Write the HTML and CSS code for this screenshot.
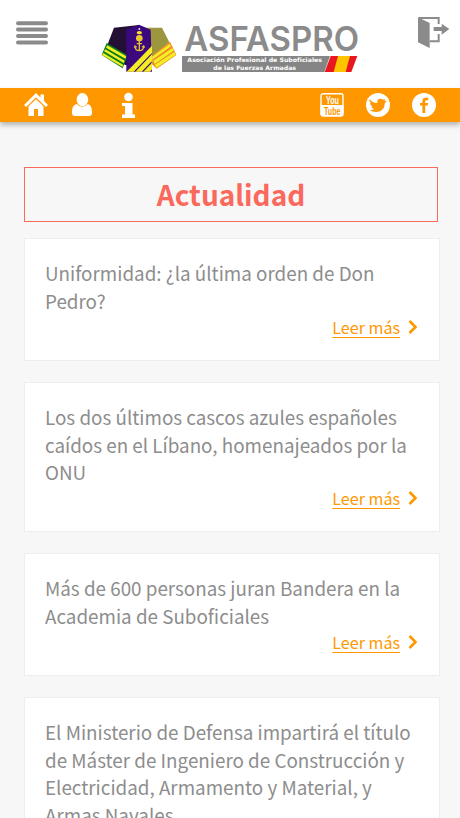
FILE: index.html
```html
<!DOCTYPE html>
<html lang="es">
<head>
<meta charset="utf-8">
<title>ASFASPRO</title>
<link rel="stylesheet" href="styles.css">
</head>
<body>
<header class="header">
  <svg class="menu" viewBox="0 0 32 26"><path d="M2 3.2h28M2 9.6h28M2 16h28M2 22.4h28"/></svg>
  <svg class="logo" viewBox="0 0 840 195">
    <path fill="#251035" d="M72 38L147 30V150H105L50 95z"/>
    <path fill="#9c963e" d="M150 38H216L238 82L186 125L160 110z"/>
    <path fill="#087c20" d="M50 84L113 121L98 160L35 120z"/>
    <path fill="#f5f020" d="M52 91L109 124L106 131L48 98zM46 103L104 137L101 144L42 109zM40 114L99 149L98 156L36 120z"/>
    <path fill="#ef8b22" d="M188 120L240 80L259 120L200 161L186 148z"/>
    <path fill="#f4ef24" d="M188 124L239 87L243 94L189 133zM190 137L247 99L251 107L194 147zM194 150L253 111L257 119L200 158z"/>
    <path fill="#3b087e" d="M147 29L182 44L186 170H109V43z"/>
    <path fill="#f4ed22" d="M110 170L186 92V113L131 170zM136 170L186 118V138L155 170zM160 170L186 143V163L180 170z"/>
    <g fill="none" stroke="#dfbd38" stroke-width="4"><path d="M148 79V106M140 86H156M135 94Q135 107 148 107Q161 107 161 94M133 98L135 93L140 97M156 97L161 93L164 98"/></g>
    <ellipse cx="148" cy="53" rx="8" ry="5" fill="#f4df29"/><circle cx="148" cy="70" r="10" fill="#e8c929"/><circle cx="148" cy="42" r="3" fill="#ddd"/>
    <text class="logo-name" x="283" y="107" textLength="524" lengthAdjust="spacingAndGlyphs">ASFASPRO</text>
    <path fill="#858585" d="M276 123H720L703 171H276z"/>
    <text class="logo-sub" x="292" y="142" textLength="404" lengthAdjust="spacingAndGlyphs">Asociación Profesional de Suboficiales</text>
    <text class="logo-sub" x="370" y="165" textLength="248" lengthAdjust="spacingAndGlyphs">de las Fuerzas Armadas</text>
    <path fill="#e9151f" d="M722 123H802L784 171H704z"/><path fill="#ffc400" d="M744 123H780L767 171H731z"/>
  </svg>
  <svg class="exit" viewBox="0 0 96 96"><path fill="#8b8b8b" d="M3 4L38 21V96L3 79z"/><path fill="none" stroke="#8b8b8b" stroke-width="6" d="M5 6H65V24M65 54V76H38"/><path fill="#8b8b8b" d="M50 33H74V23L97 39L74 56V45H50z"/></svg>
</header>
<nav class="bar">
  <div class="group">
    <svg class="icon" viewBox="0 0 24 24"><path d="M12 0L0 12L2 14L12 4.5L22 14L24 12L20 8V1.5H16.5V4.5z"/><path d="M12 6.2L4.5 13.3V23H10V16H14V23H19.5V13.3z"/></svg>
    <svg class="icon" viewBox="0 0 24 24"><ellipse cx="12.4" cy="6.6" rx="5.8" ry="6.6"/><path d="M6.5 11C3 12 2 15 2 20Q2 23 5 23H19Q22 23 22 20C22 15 21 12 17.8 11Q12.2 16.5 6.5 11z"/></svg>
    <svg class="icon" viewBox="0 0 24 24"><circle cx="12.5" cy="4" r="4.3"/><path d="M6 10H16.5V21.5H19V25H6V21.5H9V13H6z"/></svg>
  </div>
  <div class="group">
    <svg class="icon" viewBox="0 0 24 24"><rect x="1" y=".8" width="22" height="22" rx="2" fill="none" stroke="#fff" stroke-width="1.4"/><path d="M.5 12H23.5V21Q23.5 23.5 21 23.5H3Q.5 23.5 .5 21z"/><text class="you" x="6" y="10.6" textLength="13" lengthAdjust="spacingAndGlyphs">You</text><text class="tube" x="4" y="21.7" textLength="16.5" lengthAdjust="spacingAndGlyphs">Tube</text></svg>
    <svg class="icon" viewBox="0 0 24 24"><circle cx="12" cy="12" r="12"/><path class="cut" d="M3.6 6.2Q7 10 11.3 10.1Q10.8 5.8 14.5 5.8Q16 5.8 17 6.8L19.4 5.9L18.5 8L21 7.8L18.8 10Q18.7 18.3 10.6 19Q6.4 19.1 3.6 17.2Q6.5 17.3 8.2 15.9Q5.8 15.4 5.2 13.4H6.7Q4 12.2 4 9.7L5.3 10Q2.7 8.5 3.6 6.2z"/></svg>
    <svg class="icon" viewBox="0 0 24 24"><circle cx="12" cy="12" r="12"/><path class="cut" d="M10.4 20V12.5H8V10H10.4V8Q10.4 4.8 13.8 4.8H16.3V7.3H14.6Q13.2 7.3 13.2 8.6V10H16.2L15.8 12.5H13.2V20z"/></svg>
  </div>
</nav>
<main class="content">
  <h1 class="title">Actualidad</h1>
  <article class="card">
    <h2>Uniformidad: ¿la última orden de Don<br>Pedro?</h2>
    <div class="more"><a href="#">Leer más</a><svg viewBox="0 0 10 14"><path d="M1.5 1L7.5 7L1.5 13"/></svg></div>
  </article>
  <article class="card">
    <h2>Los dos últimos cascos azules españoles<br>caídos en el Líbano, homenajeados por la<br>ONU</h2>
    <div class="more"><a href="#">Leer más</a><svg viewBox="0 0 10 14"><path d="M1.5 1L7.5 7L1.5 13"/></svg></div>
  </article>
  <article class="card">
    <h2>Más de 600 personas juran Bandera en la<br>Academia de Suboficiales</h2>
    <div class="more"><a href="#">Leer más</a><svg viewBox="0 0 10 14"><path d="M1.5 1L7.5 7L1.5 13"/></svg></div>
  </article>
  <article class="card">
    <h2>El Ministerio de Defensa impartirá el título<br>de Máster de Ingeniero de Construcción y<br>Electricidad, Armamento y Material, y<br>Armas Navales</h2>
  </article>
</main>
</body>
</html>
```
FILE: styles.css
```css
* { box-sizing: border-box; }
html, body { height: 818px; overflow: hidden; }
body {
  margin: 0;
  background: #f7f7f7;
  font-family: "Noto Sans CJK SC", "Noto Sans", sans-serif;
}
.header {
  height: 88px;
  display: flex;
  align-items: flex-start;
  padding: 15px 10px 0 16px;
  background: #fff;
}
.menu { width: 32px; height: 26px; margin-top: 5px; }
.menu path { stroke: #8b8b8b; stroke-width: 4; stroke-linecap: round; }
.logo { width: 280px; height: 65px; margin-left: 42px; }
.logo-name { font: 600 103px Inter, sans-serif; fill: #8b8b8b; }
.logo-sub { font: 700 18px "DejaVu Sans", sans-serif; fill: #fff; }
.exit { width: 32px; height: 32px; margin-left: 47px; margin-top: 1px; }
.bar {
  height: 34px;
  display: flex;
  justify-content: space-between;
  padding: 5px 24px 0;
  background: #ff9800;
  box-shadow: 0 3px 5px rgba(0, 0, 0, .28);
}
.group { display: flex; gap: 22px; }
.icon { width: 24px; height: 24px; fill: #fff; overflow: visible; }
.cut { fill: #ff9800; }
.you, .tube { font: 700 10px "Liberation Sans", sans-serif; }
.tube { fill: #ff9800; }
.content { padding: 45px 20px 0 24px; }
.title {
  width: 414px;
  height: 55px;
  margin: 0 0 16px;
  border: 1px solid #fa695c;
  color: #fa695c;
  font-size: 28px;
  font-weight: 700;
  line-height: 52px;
  text-align: center;
}
.card {
  margin-bottom: 21px;
  padding: 20.4px 21px 20.6px 20px;
  border: 1px solid #eeeeee;
  background: #fff;
}
.card h2 {
  margin: 0;
  color: #8d8d8d;
  font-size: 18.82px;
  font-weight: 400;
  line-height: 27.5px;
  white-space: nowrap;
}
.more {
  height: 24.8px;
  display: flex;
  justify-content: flex-end;
  align-items: center;
  gap: 8px;
}
.more a {
  color: #ff9800;
  font-size: 16.1px;
  line-height: 24px;
  text-decoration: underline;
  text-underline-offset: 3px;
}
.more svg { width: 10px; height: 14px; }
.more path { fill: none; stroke: #ff9800; stroke-width: 2.6; }
```
